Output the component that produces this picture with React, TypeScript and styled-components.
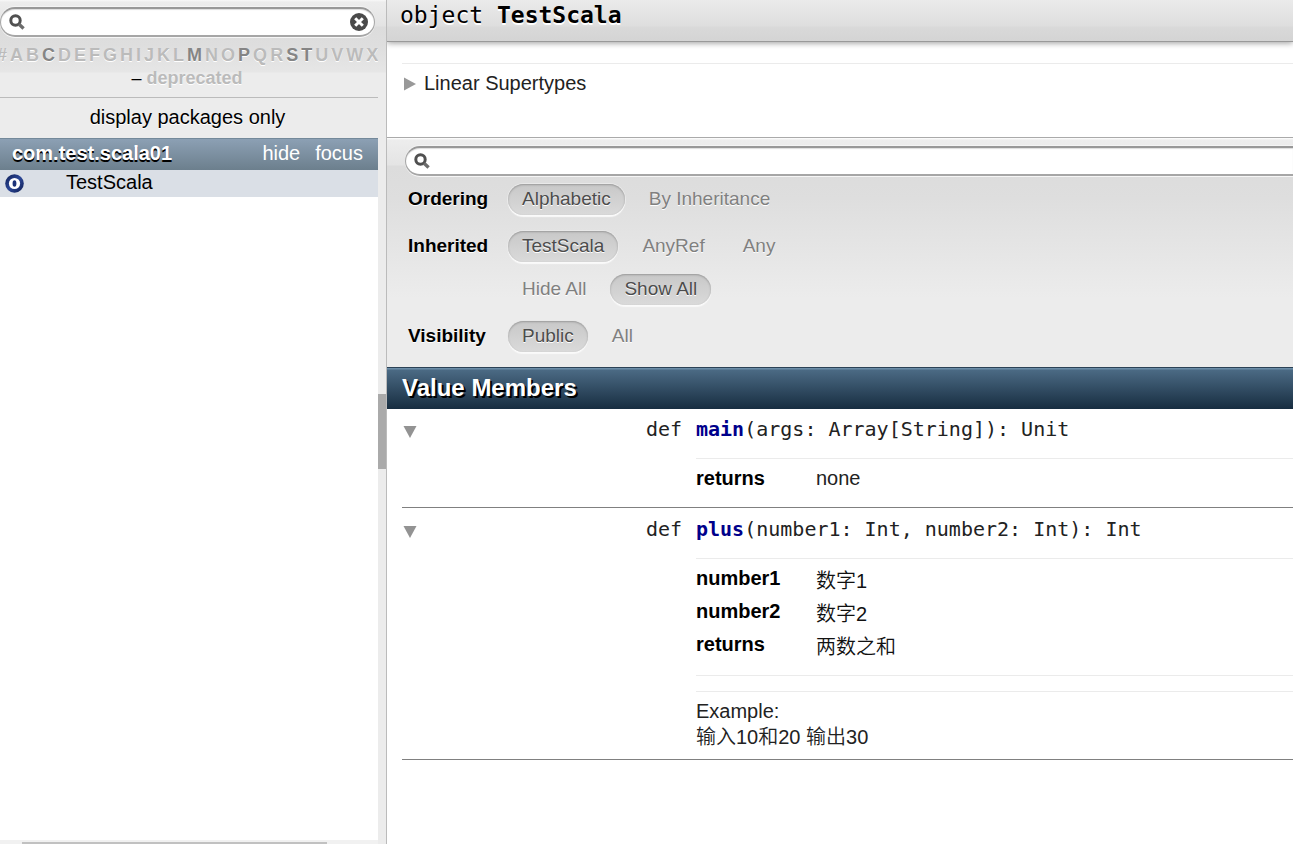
import React from 'react';
import styled, { createGlobalStyle, css } from 'styled-components';

const sans = `"Liberation Sans", Arial, "Noto Sans CJK SC", sans-serif`;
const mono = `"DejaVu Sans Mono", "Liberation Mono", monospace`;

const GlobalStyle = createGlobalStyle`
  * { box-sizing: border-box; }
  body {
    margin: 0;
    background: #fff;
    color: #000;
    font: 20px/24px ${sans};
  }
  a { color: inherit; text-decoration: none; }
  button, input { font-family: inherit; }
`;

const Page = styled.div`
  display: flex;
  height: 100vh;
  overflow: hidden;
`;

const Sidebar = styled.nav`
  flex: none;
  width: 378px;
  display: flex;
  flex-direction: column;
  background: #fff;
`;

const panelShade = css`
  background: #ececec
    linear-gradient(#f8f8f8 0, #ededed 2px, #e3e3e3 26px, #dcdcdc 27px, #dedede 45px, #e6e6e6 72px, #ececec 73px)
    no-repeat 0 0 / 100% 73px;
`;

const SidebarTop = styled.div`
  ${panelShade}
  height: 98px;
  padding-top: 7px;
  border-bottom: 1px solid #bbb;
`;

const SearchBox = styled.label<{ $open?: boolean }>`
  display: flex;
  align-items: center;
  height: 30px;
  padding: 0 6px 0 8px;
  gap: 8px;
  background: #fff;
  border: 2px solid #a2a2a2;
  border-color: #989898 #a6a6a6 #a6a6a6;
  border-width: 2px 1px 2px;
  border-radius: 15px;
  box-shadow: 0 1px 0 #f6f6f6, 0 -1px 0 #f4f4f4, inset 0 1px 1px #ddd;
  ${(p) =>
    p.$open
      ? css`
          margin-left: 18px;
          border-right: 0;
          border-top-right-radius: 0;
          border-bottom-right-radius: 0;
        `
      : css`
          margin-right: 3px;
        `}
`;

const SearchInput = styled.input`
  flex: 1;
  min-width: 0;
  border: 0;
  outline: 0;
  padding: 0;
  background: transparent;
  font-size: 18px;
`;

const ClearButton = styled.button`
  display: flex;
  padding: 0;
  border: 0;
  background: none;
`;

const Letters = styled.div`
  display: flex;
  gap: 3px;
  margin: 6px 0 0 -3px;
  font-size: 18px;
  font-weight: bold;
`;

const Letter = styled.a<{ $active: boolean }>`
  color: ${(p) => (p.$active ? '#858585' : '#bbb')};
  text-shadow: #fff 0 1px 0;
`;

const Deprecated = styled.div`
  text-align: center;
  padding-right: 4px;
  line-height: 22px;
  font-size: 18px;

  a {
    color: #bbb;
    font-weight: bold;
    text-shadow: #fff 0 1px 0;
  }
`;

const PackagesOnly = styled.button`
  height: 40px;
  padding: 0 3px 2px 0;
  border: 0;
  background: #ececec;
  color: #000;
  font-size: 20px;
  text-shadow: #fff 0 1px 0;
`;

const PackageBar = styled.div`
  display: flex;
  align-items: center;
  gap: 15px;
  height: 32px;
  padding: 0 15px 3px 12px;
  border-top: 1px solid #74899a;
  background: linear-gradient(#8ca0b4, #6c7f8d);
  color: #fff;

  strong {
    flex: 1;
    text-shadow: #000 0 2px 0;
  }
`;

const EntryRow = styled.div`
  display: flex;
  align-items: center;
  height: 27px;
  padding: 0 0 3px 5px;
  background: #dadfe6;

  svg { margin-top: 2px; }
  a { margin-left: 42px; }
`;

const SidebarScroll = styled.div`
  height: 4px;
  margin-top: auto;
  padding: 2px 51px 0 22px;
  background: #f1f1f1;
`;

const SidebarThumb = styled.div`
  height: 2px;
  background: #c1c1c1;
`;

const Splitter = styled.div`
  ${panelShade}
  flex: none;
  width: 9px;
  display: flex;
  flex-direction: column;
  justify-content: center;
  border-right: 1px solid #bbb;
`;

const SplitterThumb = styled.div`
  height: 75px;
  margin-top: 19px;
  background: #aaa;
`;

const Main = styled.main`
  flex: 1;
  min-width: 0;
  overflow: hidden;
`;

const Definition = styled.header`
  height: 42px;
  padding: 3px 13px;
  background: linear-gradient(#ebebeb, #dedede 26px, #d9d9d9 27px, #d4d4d4);
  border-bottom: 1px solid #999;
  box-shadow: 0 1px 6px rgba(0, 0, 0, 0.4);
`;

const Title = styled.h1`
  margin: 0;
  font: 23px/24px ${mono};
  text-shadow: #fff 0 2px 0;
`;

const Comment = styled.section`
  height: 95px;
  padding: 21px 0 0 15px;
`;

const Supertypes = styled.button`
  display: flex;
  align-items: center;
  gap: 8px;
  width: 100%;
  padding: 7px 0 0 2px;
  border: 0;
  border-top: 1px solid #ebebeb;
  background: none;
  color: #222;
  font-size: 20px;
  line-height: 24px;

  svg { margin-top: 2px; }
`;

const Filter = styled.section`
  height: 230px;
  padding: 8px 0 0;
  border-top: 1px solid #aaa;
  background: #ececec
    linear-gradient(#fff 0, #ededed 2px, #e4e4e4 27px, #dcdcdc 28px, #dedede 60px, #ececec 160px)
    no-repeat 0 0 / 100% 160px;
`;

const FilterRow = styled.div<{ $gap: number }>`
  display: grid;
  grid-template-columns: 100px 1fr;
  align-items: center;
  margin: ${(p) => p.$gap}px 0 0 21px;
  font-size: 19px;

  strong {
    padding-bottom: 2px;
    text-shadow: #fff 0 1px 0;
  }
`;

const Options = styled.div`
  display: flex;
  gap: 10px;
`;

const Pill = styled.button<{ $on?: boolean }>`
  height: 31px;
  padding: 0 14px 2px;
  border: 0;
  border-radius: 16px;
  font-size: 19px;
  line-height: 24px;
  color: ${(p) => (p.$on ? '#4c4c4c' : '#808080')};
  background: ${(p) => (p.$on ? 'linear-gradient(#c8c8c8, #dadada)' : 'none')};
  box-shadow: ${(p) =>
    p.$on ? '0 2px 1px #fafafa, 0 0 0 1px #e9e9e9, inset 0 1px 2px #999' : 'none'};
  text-shadow: #fff 0 1px 0;
`;

const GroupTitle = styled.h2`
  height: 42px;
  margin: 0;
  padding: 6px 15px;
  border-top: 1px solid #2b4256;
  background: linear-gradient(#6b8da8 0, #6b8da8 1px, #4b6a84 2px, #172d40 100%);
  color: #fff;
  font-size: 24px;
  line-height: 28px;
  text-shadow: #000 2px 2px 0;
`;

const Member = styled.article`
  display: grid;
  grid-template-columns: 280px 1fr;
  column-gap: 14px;
  margin-left: 15px;
  padding: 8px 0 9px;
  border-bottom: 1px solid #808080;

  & + & { padding-top: 9px; }
`;

const Kind = styled.div`
  display: flex;
  align-items: center;
  justify-content: space-between;
  padding-left: 1px;
  font-family: ${mono};
  color: #222;
`;

const Toggle = styled.button`
  display: flex;
  padding: 6px 0 0;
  border: 0;
  background: none;
`;

const Signature = styled.div`
  font-family: ${mono};
  color: #222;
  white-space: nowrap;

  a {
    color: #00008b;
    font-weight: bold;
  }
`;

const Details = styled.div`
  grid-column: 2;
  margin-top: 17px;
`;

const Params = styled.dl<{ $ruled?: boolean }>`
  display: grid;
  grid-template-columns: 120px 1fr;
  row-gap: 9px;
  margin: 0;
  padding: 7px 0 ${(p) => (p.$ruled ? 19 : 8)}px;
  border-top: 1px solid #ebebeb;
  border-bottom: ${(p) => (p.$ruled ? '1px solid #ebebeb' : '0')};

  dt { font-weight: bold; }
  dd { height: 24px; margin: 0; color: #222; }
  dd:lang(zh) { padding-top: 3px; font-weight: 350; color: #111; }
`;

const Example = styled.div`
  margin-top: 15px;
  padding-top: 6px;
  border-top: 1px solid #ebebeb;
  line-height: 26px;
  font-weight: 350;
  color: #222;
`;

const Magnifier = () => (
  <svg width="16" height="16" viewBox="0 0 16 16" aria-hidden="true">
    <circle cx="6.5" cy="6.5" r="4.7" fill="none" stroke="#505050" strokeWidth="3" />
    <path d="M10 10.2 14.6 14.4" stroke="#6c6c6c" strokeWidth="3.4" />
  </svg>
);

const ClearIcon = () => (
  <svg width="18" height="18" viewBox="0 0 18 18" aria-hidden="true">
    <circle cx="9" cy="9" r="9" fill="#4a4a4a" />
    <path d="M5.2 5.2 12.8 12.8M12.8 5.2 5.2 12.8" stroke="#fff" strokeWidth="3" />
  </svg>
);

const ObjectIcon = () => (
  <svg width="19" height="19" viewBox="0 0 19 19" aria-hidden="true">
    <defs>
      <linearGradient id="ring" x1="0" y1="0" x2="1" y2="1">
        <stop offset="0" stopColor="#101f55" />
        <stop offset="0.5" stopColor="#2c4796" />
        <stop offset="1" stopColor="#0e1c50" />
      </linearGradient>
    </defs>
    <circle cx="9.5" cy="9.5" r="9.3" fill="url(#ring)" />
    <circle cx="9.5" cy="9.5" r="5.6" fill="#fff" />
    <ellipse cx="9.5" cy="9.5" rx="1.9" ry="3.2" fill="#1c3278" />
  </svg>
);

const ArrowRight = () => (
  <svg width="12" height="14" viewBox="0 0 12 14" aria-hidden="true">
    <path d="M0 .5 12 7 0 13.5Z" fill="#999" />
  </svg>
);

const ArrowDown = () => (
  <svg width="14" height="12" viewBox="0 0 14 12" aria-hidden="true">
    <path d="M.5 0H13.5L7 12Z" fill="#939393" />
  </svg>
);

const letters = '#ABCDEFGHIJKLMNOPQRSTUVWX'.split('');
const usedLetters = 'CMPST';

type Option = { label: string; on?: boolean };

const filterRows: { label: string; gap: number; options: Option[] }[] = [
  { label: 'Ordering', gap: 8, options: [{ label: 'Alphabetic', on: true }, { label: 'By Inheritance' }] },
  { label: 'Inherited', gap: 16, options: [{ label: 'TestScala', on: true }, { label: 'AnyRef' }, { label: 'Any' }] },
  { label: '', gap: 12, options: [{ label: 'Hide All' }, { label: 'Show All', on: true }] },
  { label: 'Visibility', gap: 16, options: [{ label: 'Public', on: true }, { label: 'All' }] },
];

export default function App() {
  return (
    <>
      <GlobalStyle />
      <Page>
        <Sidebar>
          <SidebarTop>
            <SearchBox>
              <Magnifier />
              <SearchInput type="text" aria-label="Filter entities" />
              <ClearButton type="button" aria-label="Clear">
                <ClearIcon />
              </ClearButton>
            </SearchBox>
            <Letters>
              {letters.map((l) => (
                <Letter key={l} href="#" $active={usedLetters.includes(l)}>
                  {l}
                </Letter>
              ))}
            </Letters>
            <Deprecated>
              – <a href="#">deprecated</a>
            </Deprecated>
          </SidebarTop>
          <PackagesOnly type="button">display packages only</PackagesOnly>
          <PackageBar>
            <strong>com.test.scala01</strong>
            <a href="#">hide</a>
            <a href="#">focus</a>
          </PackageBar>
          <EntryRow>
            <ObjectIcon />
            <a href="#">TestScala</a>
          </EntryRow>
          <SidebarScroll>
            <SidebarThumb />
          </SidebarScroll>
        </Sidebar>
        <Splitter>
          <SplitterThumb />
        </Splitter>
        <Main>
          <Definition>
            <Title>
              object <b>TestScala</b>
            </Title>
          </Definition>
          <Comment>
            <Supertypes type="button">
              <ArrowRight />
              Linear Supertypes
            </Supertypes>
          </Comment>
          <Filter>
            <SearchBox $open>
              <Magnifier />
              <SearchInput type="text" aria-label="Filter members" />
            </SearchBox>
            {filterRows.map((row) => (
              <FilterRow key={row.label} $gap={row.gap}>
                <strong>{row.label}</strong>
                <Options>
                  {row.options.map((o) => (
                    <Pill key={o.label} type="button" $on={o.on}>
                      {o.label}
                    </Pill>
                  ))}
                </Options>
              </FilterRow>
            ))}
          </Filter>
          <GroupTitle>Value Members</GroupTitle>
          <Member>
            <Kind>
              <Toggle type="button" aria-label="Collapse main">
                <ArrowDown />
              </Toggle>
              def
            </Kind>
            <Signature>
              <a href="#">main</a>(args: Array[String]): Unit
            </Signature>
            <Details>
              <Params>
                <dt>returns</dt>
                <dd>none</dd>
              </Params>
            </Details>
          </Member>
          <Member>
            <Kind>
              <Toggle type="button" aria-label="Collapse plus">
                <ArrowDown />
              </Toggle>
              def
            </Kind>
            <Signature>
              <a href="#">plus</a>(number1: Int, number2: Int): Int
            </Signature>
            <Details>
              <Params $ruled>
                <dt>number1</dt>
                <dd lang="zh">数字1</dd>
                <dt>number2</dt>
                <dd lang="zh">数字2</dd>
                <dt>returns</dt>
                <dd lang="zh">两数之和</dd>
              </Params>
              <Example>
                Example:
                <br />
                输入10和20 输出30
              </Example>
            </Details>
          </Member>
        </Main>
      </Page>
    </>
  );
}
